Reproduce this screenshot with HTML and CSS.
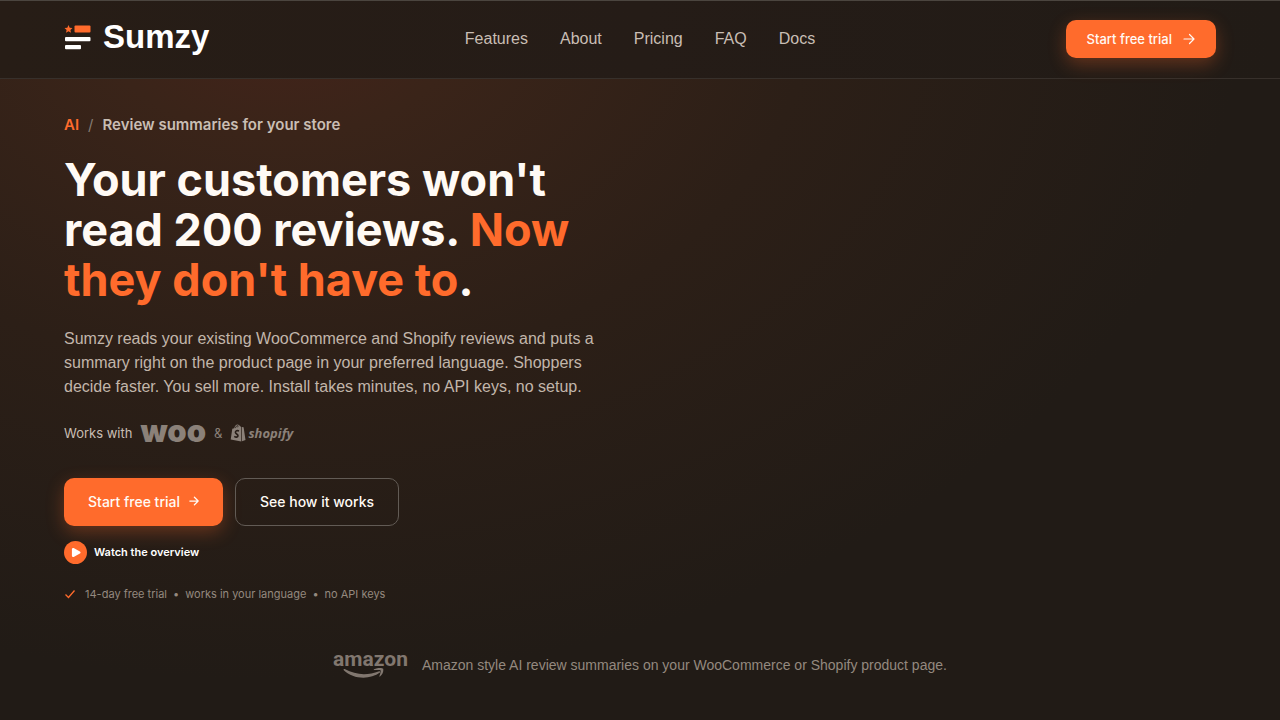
FILE: index.html
```html
<!DOCTYPE html>
<html lang="en">
<head>
<meta charset="utf-8">
<meta name="viewport" content="width=device-width, initial-scale=1">
<title>Sumzy</title>
<link rel="stylesheet" href="styles.css">
</head>
<body>
<header class="site-header">
  <a class="brand" href="#">
    <svg class="brand-mark" viewBox="0 0 27 25" aria-hidden="true">
      <path fill="#ff6b2c" d="M4.500 0l1.200 2.700 2.800.3-2.100 1.900.6 2.900-2.500-1.500L2 7.800l.6-2.900L.5 3l2.800-.3z"/>
      <rect x="10.500" y="0.500" width="16" height="7" rx="1" fill="#ff6b2c"/>
      <rect x="1" y="12" width="25.500" height="4.300" rx="1" fill="#fff"/>
      <rect x="1" y="20" width="16" height="4.300" rx="1" fill="#fff"/>
    </svg>
    <span class="brand-name">Sumzy</span>
  </a>
  <nav class="nav">
    <a href="#">Features</a>
    <a href="#">About</a>
    <a href="#">Pricing</a>
    <a href="#">FAQ</a>
    <a href="#">Docs</a>
  </nav>
  <div class="header-action">
    <a class="btn btn-primary btn-small" href="#">Start free trial
      <svg class="arrow" viewBox="0 0 12 12" aria-hidden="true"><path d="M1 6h10M6.500 1.500L11 6l-4.500 4.500"/></svg>
    </a>
  </div>
</header>
<main class="hero">
  <p class="eyebrow"><span class="accent">AI</span><span class="slash">/</span><span>Review summaries for your store</span></p>
  <h1 class="headline">Your customers won't<br>read 200 reviews. <span class="accent">Now<br>they don't have to</span>.</h1>
  <p class="lead">Sumzy reads your existing WooCommerce and Shopify reviews and puts a summary right on the product page in your preferred language. Shoppers decide faster. You sell more. Install takes minutes, no API keys, no setup.</p>
  <div class="works">
    <span>Works with</span>
    <span class="woo">woo</span>
    <span class="amp">&amp;</span>
    <span class="shopify">
      <svg class="bag" viewBox="0 0 16 18" aria-hidden="true">
        <path fill="#8b8179" d="M2.300 4.800L4.200 4.200C4.800 2 6.200.5 7.700.6c.6 0 1 .4 1.300.9.900-.1 1.500.5 1.900 1.500l.4-.1V17.400L.7 15.400zM12 3l1.600.2 1.900 12.900-3.500 1.200z"/>
        <path fill="none" stroke="#271d17" stroke-width=".8" d="M5.400 4.100C6 2.400 6.800 1.500 7.700 1.500M7.700 3.300C8 2.500 8 2 7.800 1.500"/>
        <path fill="none" stroke="#271d17" stroke-width="1.600" d="M9 6.900C7.300 6.200 5.400 6.800 5.400 8.300c0 1.700 2.800 1.700 2.600 3.600-.2 1.500-2.200 1.600-3.700.5"/>
      </svg>
      <span>shopify</span>
    </span>
  </div>
  <div class="actions">
    <a class="btn btn-primary btn-large" href="#">Start free trial
      <svg class="arrow" viewBox="0 0 12 12" aria-hidden="true"><path d="M1 6h10M6.500 1.500L11 6l-4.500 4.500"/></svg>
    </a>
    <a class="btn btn-outline btn-large" href="#">See how it works</a>
  </div>
  <button class="watch" type="button">
    <svg viewBox="0 0 24 24" aria-hidden="true"><circle cx="12" cy="12" r="12" fill="#ff6b2c"/><path d="M9.500 8.500v7l6.500-3.500z" fill="#fff" stroke="#fff" stroke-width="2.500" stroke-linejoin="round"/></svg>
    Watch the overview
  </button>
  <div class="perks">
    <svg viewBox="0 0 12 12" aria-hidden="true"><path d="M1.500 6.500l3 3 6-7"/></svg>
    <ul>
      <li>14-day free trial</li>
      <li>works in your language</li>
      <li>no API keys</li>
    </ul>
  </div>
  <div class="note">
    <span class="amazon">
      <span>amazon</span>
      <svg viewBox="0 0 74 11" aria-hidden="true"><path fill="#81776f" d="M10.500 1.500c0-.6.600-.8 1.200-.4C23 7.200 34 7.800 46.200 3.300c.9-.3 1.500.6.8 1.200C37 12 20 11.300 10.800 2.200zM41 1.300C45-.3 49-.2 50.200.8 50.700 3 49.700 6.500 47 8.500c-.4.300-.8.100-.6-.4.800-2 1.700-4.800 1.300-5.600-.8-.8-3.700-.5-6.200-.4-.8 0-1-.5-.5-.8z"/></svg>
    </span>
    <p>Amazon style AI review summaries on your WooCommerce or Shopify product page.</p>
  </div>
</main>
</body>
</html>
```
FILE: styles.css
```css
* {
  box-sizing: border-box;
}

body {
  margin: 0;
  min-height: 100vh;
  background: radial-gradient(ellipse 960px 680px at 22% 0, #45231a 0%, #3a2419 20%, #2c1f17 55%, #211b16 100%) #211b16;
  color: #fffaf5;
  font-family: Inter, "Liberation Sans", sans-serif;
}

a {
  color: inherit;
  text-decoration: none;
}

.accent {
  color: #ff6b2c;
}

.site-header {
  display: grid;
  grid-template-columns: 1fr auto 1fr;
  align-items: center;
  height: 79px;
  padding: 0 64px 2px;
  border-top: 1px solid #4b453f;
  border-bottom: 1px solid #37302b;
  background: linear-gradient(90deg, #271d16, #251c17 50%, #211b16);
}

.brand {
  display: flex;
  align-items: center;
  gap: 12px;
  padding-bottom: 3px;
}

.brand-mark {
  width: 27px;
  height: 25px;
}

.brand-name {
  color: #fff;
  font: bold 33px/40px "Liberation Sans", sans-serif;
}

.nav {
  display: flex;
  gap: 32px;
  color: #c9beb4;
  font: 16px/20px "Liberation Sans", sans-serif;
}

.header-action {
  display: flex;
  justify-content: flex-end;
}

.btn {
  display: inline-flex;
  align-items: center;
  justify-content: center;
  border-radius: 10px;
  font-weight: 500;
}

.btn-primary {
  background: #ff6b2c;
  box-shadow: 0 6px 18px rgba(255, 107, 44, 0.3);
}

.btn-outline {
  border: 1px solid #625b55;
}

.btn-small {
  gap: 11px;
  height: 38px;
  padding: 0 21px;
  font-size: 13px;
}

.btn-large {
  gap: 9px;
  height: 48px;
  padding: 0 24px 2px;
  font-size: 14px;
}

.arrow {
  width: 12px;
  height: 12px;
  fill: none;
  stroke: currentColor;
  stroke-width: 1.2;
  stroke-linecap: round;
  stroke-linejoin: round;
}

.btn-large .arrow {
  width: 10px;
  height: 10px;
  stroke-width: 1.5;
}

.hero {
  display: flex;
  flex-direction: column;
  align-items: flex-start;
  padding: 36px 64px;
}

.eyebrow {
  display: flex;
  gap: 9px;
  margin: 0 0 20px;
  color: #c9beb4;
  font-size: 15px;
  font-weight: 600;
  line-height: 20px;
}

.slash {
  color: #867c73;
  font-weight: 400;
}

.headline {
  margin: 0 0 22px;
  font-size: 45px;
  font-weight: 700;
  line-height: 50px;
}

.lead {
  max-width: 560px;
  margin: 0 0 22px;
  color: #c2b6ab;
  font: 16px/24px "Liberation Sans", sans-serif;
}

.works {
  display: flex;
  align-items: center;
  gap: 8px;
  height: 24px;
  margin-bottom: 33px;
  color: #c9beb4;
  font-size: 13px;
}

.woo {
  padding-bottom: 4px;
  color: #8b8179;
  font-size: 31px;
  font-weight: 900;
  line-height: 24px;
}

.amp {
  color: #8b8179;
}

.shopify {
  display: flex;
  align-items: center;
  gap: 2px;
  color: #8b8179;
  font: italic bold 13px/18px "Open Sans", sans-serif;
}

.bag {
  width: 16px;
  height: 18px;
}

.actions {
  display: flex;
  gap: 12px;
}

.watch {
  display: flex;
  align-items: center;
  gap: 7px;
  margin: 14px 0 20px;
  padding: 0;
  border: 0;
  background: none;
  color: #fff;
  font: 600 11px/24px Inter, sans-serif;
}

.watch svg {
  width: 23px;
  height: 23px;
}

.perks {
  display: flex;
  align-items: center;
  gap: 9px;
  color: #94897f;
  font-size: 11px;
  line-height: 20px;
}

.perks svg {
  width: 12px;
  height: 12px;
  fill: none;
  stroke: #ff6b2c;
  stroke-width: 1.3;
}

.perks ul {
  display: flex;
  gap: 6px;
  margin: 0;
  padding: 0;
  list-style: none;
}

.perks li + li::before {
  content: "•";
  margin-right: 6px;
}

.note {
  display: flex;
  align-items: center;
  align-self: center;
  gap: 14px;
  margin-top: 46px;
  color: #94897f;
  font: 14px/20px "Liberation Sans", sans-serif;
}

.note p {
  margin: 0;
}

.amazon {
  display: flex;
  flex-direction: column;
  color: #81776f;
  font: bold 21px/18px Roboto, sans-serif;
}

.amazon svg {
  width: 74px;
  height: 11px;
}
```
